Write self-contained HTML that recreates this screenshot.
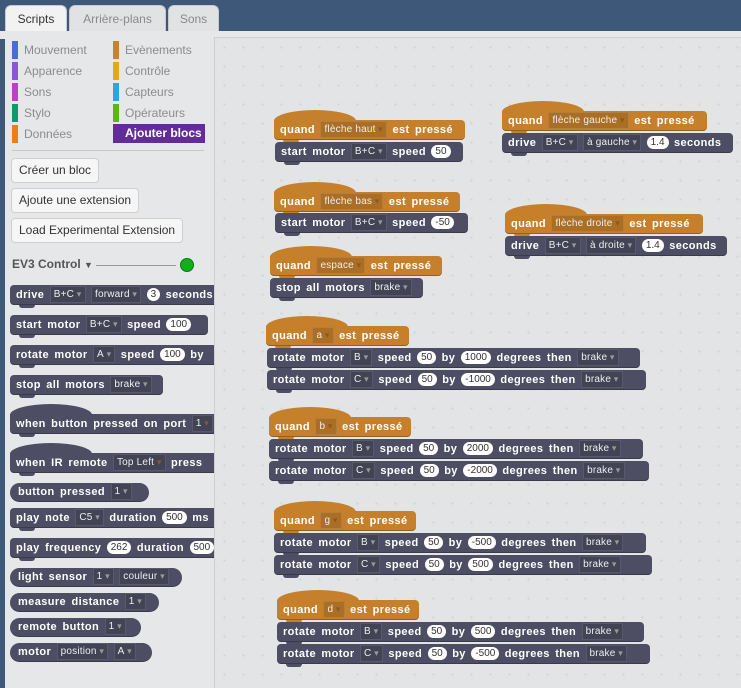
<!DOCTYPE html>
<html><head><meta charset="utf-8"><style>
*{margin:0;padding:0;box-sizing:border-box}
body{width:741px;height:688px;overflow:hidden;background:#3d5878;font-family:"Liberation Sans",sans-serif;position:relative}
.tab{position:absolute;top:5px;height:27px;border-radius:6px 6px 0 0;background:#e1e2e4;color:#8a8a8a;font-size:12px;text-align:center;line-height:26px;border:1px solid #c9cacc;border-bottom:none}
#band{position:absolute;left:0;top:31px;width:741px;height:8px;background:#e8e8e9}
#pal{position:absolute;left:5px;top:31px;width:210px;height:657px;background:#e6e7e8;overflow:hidden}
#scr{position:absolute;left:214px;top:37px;width:527px;height:651px;background-color:#e3e4e5;border:1px solid #cfcfcf;border-right:none;border-bottom:none;background-image:radial-gradient(circle,#d2d3d4 1px,transparent 1.2px);background-size:19px 19px}
.cat{position:absolute;font-size:12px;color:#8c8c8c;line-height:18px;height:18px;padding-left:12px}
.cat i{position:absolute;left:0;top:0;width:6px;height:18px}
.btn{position:absolute;left:6px;height:25px;background:#f6f6f6;border:1px solid #cfcfcf;border-radius:4px;font-size:12px;color:#333;line-height:23px;padding:0 7px}
.b{position:absolute;height:20px;background:#4d4e64;border-radius:4px;color:#fff;font-weight:bold;font-size:11px;line-height:20px;padding:0 6px;white-space:nowrap;letter-spacing:.4px;word-spacing:2px;box-shadow:inset 0 -1px 0 rgba(0,0,0,.25)}
.b::after{content:"";position:absolute;left:9px;bottom:-3px;width:16px;height:3px;background:inherit;border-radius:0 0 4px 4px}
.b.r::after{display:none}
.r{border-radius:10px;padding:0 8px;height:19px;line-height:19px}
.h{background:#c6802b;border-radius:0 4px 4px 4px}
.h::before{content:"";position:absolute;left:0;top:-10px;width:82px;height:11px;background:inherit;border-radius:50% 50% 0 0/100% 100% 0 0}
.d{display:inline-block;background:rgba(0,0,0,.14);border:1px solid rgba(255,255,255,.12);font-weight:normal;font-size:10px;line-height:14px;padding:0 3px;color:#eee;letter-spacing:.2px;word-spacing:0;vertical-align:1px}
.d::after{content:" \25BE";font-size:9px;color:#999}
.h .d::after{color:#8a5a20}
.v{display:inline-block;background:#fff;color:#333;border-radius:8px;font-weight:normal;font-size:10px;line-height:13px;padding:0 4px;vertical-align:1px;letter-spacing:0}
</style></head><body>
<div class="tab" style="left:5px;width:62px;background:#f2f2f2;color:#333">Scripts</div>
<div class="tab" style="left:69px;width:97px">Arrière-plans</div>
<div class="tab" style="left:168px;width:51px">Sons</div>
<div id="band"></div>
<div id="pal">
<div class="cat" style="left:7px;top:10px"><i style="background:#4a6cd4"></i>Mouvement</div>
<div class="cat" style="left:7px;top:31px"><i style="background:#8a55d7"></i>Apparence</div>
<div class="cat" style="left:7px;top:52px"><i style="background:#bb42c3"></i>Sons</div>
<div class="cat" style="left:7px;top:73px"><i style="background:#0e9a6c"></i>Stylo</div>
<div class="cat" style="left:7px;top:94px"><i style="background:#ee7d16"></i>Données</div>
<div class="cat" style="left:108px;top:10px"><i style="background:#c88330"></i>Evènements</div>
<div class="cat" style="left:108px;top:31px"><i style="background:#e1a91a"></i>Contrôle</div>
<div class="cat" style="left:108px;top:52px"><i style="background:#2ca5e2"></i>Capteurs</div>
<div class="cat" style="left:108px;top:73px"><i style="background:#5cb712"></i>Opérateurs</div>
<div class="cat" style="left:108px;top:93px;width:92px;height:19px;background:#632d99;color:#fff;font-weight:bold;padding-left:12px;line-height:19px"><i style="background:#632d99"></i>Ajouter blocs</div>
<div style="position:absolute;left:7px;top:119px;width:192px;height:1px;background:#c8c8c8"></div>
<div class="btn" style="top:127px">Créer un bloc</div>
<div class="btn" style="top:157px">Ajoute une extension</div>
<div class="btn" style="top:187px">Load Experimental Extension</div>
<div style="position:absolute;left:7px;top:226px;font-size:12px;font-weight:bold;color:#555">EV3 Control <span style="font-size:9px">▼</span></div>
<div style="position:absolute;left:91px;top:234px;width:80px;height:1px;background:#999"></div>
<div style="position:absolute;left:175px;top:227px;width:14px;height:14px;border-radius:50%;background:#11b01a;border:1px solid #0a7a10"></div>

<div class="b" style="left:5px;top:254px;width:220px">drive <span class="d">B+C</span> <span class="d">forward</span> <span class="v">3</span> seconds</div>
<div class="b" style="left:5px;top:284px;width:198px">start motor <span class="d">B+C</span> speed <span class="v">100</span></div>
<div class="b" style="left:5px;top:314px;width:220px">rotate motor <span class="d">A</span> speed <span class="v">100</span> by</div>
<div class="b" style="left:5px;top:344px;width:153px">stop all motors <span class="d">brake</span></div>
<div class="b h" style="left:5px;top:383px;width:220px;background:#4d4e64">when button pressed on port <span class="d">1</span></div>
<div class="b h" style="left:5px;top:422px;width:220px;background:#4d4e64">when IR remote <span class="d">Top Left</span> press</div>
<div class="b r" style="left:5px;top:452px;width:139px">button pressed <span class="d">1</span></div>
<div class="b" style="left:5px;top:477px;width:220px">play note <span class="d">C5</span> duration <span class="v">500</span> ms</div>
<div class="b" style="left:5px;top:507px;width:220px">play frequency <span class="v">262</span> duration <span class="v">500</span></div>
<div class="b r" style="left:5px;top:537px;width:172px">light sensor <span class="d">1</span> <span class="d">couleur</span></div>
<div class="b r" style="left:5px;top:562px;width:149px">measure distance <span class="d">1</span></div>
<div class="b r" style="left:5px;top:587px;width:131px">remote button <span class="d">1</span></div>
<div class="b r" style="left:5px;top:612px;width:142px">motor <span class="d">position</span> <span class="d">A</span></div>
</div>
<div id="scr"></div>

<div class="b h" style="left:274px;top:120px;width:191px">quand <span class="d">flèche haut</span> est pressé</div>
<div class="b" style="left:275px;top:142px;width:188px">start motor <span class="d">B+C</span> speed <span class="v">50</span></div>
<div class="b h" style="left:274px;top:192px;width:186px">quand <span class="d">flèche bas</span> est pressé</div>
<div class="b" style="left:275px;top:213px;width:193px">start motor <span class="d">B+C</span> speed <span class="v">-50</span></div>
<div class="b h" style="left:270px;top:256px;width:172px">quand <span class="d">espace</span> est pressé</div>
<div class="b" style="left:270px;top:278px;width:153px">stop all motors <span class="d">brake</span></div>
<div class="b h" style="left:502px;top:111px;width:205px">quand <span class="d">flèche gauche</span> est pressé</div>
<div class="b" style="left:502px;top:133px;width:231px">drive <span class="d">B+C</span> <span class="d">à gauche</span> <span class="v">1.4</span> seconds</div>
<div class="b h" style="left:505px;top:214px;width:198px">quand <span class="d">flèche droite</span> est pressé</div>
<div class="b" style="left:505px;top:236px;width:222px">drive <span class="d">B+C</span> <span class="d">à droite</span> <span class="v">1.4</span> seconds</div>

<div class="b h" style="left:266px;top:326px;width:143px">quand <span class="d">a</span> est pressé</div>
<div class="b" style="left:267px;top:348px;width:373px">rotate motor <span class="d">B</span> speed <span class="v">50</span> by <span class="v">1000</span> degrees then <span class="d">brake</span></div>
<div class="b" style="left:267px;top:370px;width:379px">rotate motor <span class="d">C</span> speed <span class="v">50</span> by <span class="v">-1000</span> degrees then <span class="d">brake</span></div>

<div class="b h" style="left:269px;top:417px;width:142px">quand <span class="d">b</span> est pressé</div>
<div class="b" style="left:269px;top:439px;width:374px">rotate motor <span class="d">B</span> speed <span class="v">50</span> by <span class="v">2000</span> degrees then <span class="d">brake</span></div>
<div class="b" style="left:269px;top:461px;width:380px">rotate motor <span class="d">C</span> speed <span class="v">50</span> by <span class="v">-2000</span> degrees then <span class="d">brake</span></div>

<div class="b h" style="left:274px;top:511px;width:142px">quand <span class="d">g</span> est pressé</div>
<div class="b" style="left:274px;top:533px;width:372px">rotate motor <span class="d">B</span> speed <span class="v">50</span> by <span class="v">-500</span> degrees then <span class="d">brake</span></div>
<div class="b" style="left:274px;top:555px;width:378px">rotate motor <span class="d">C</span> speed <span class="v">50</span> by <span class="v">500</span> degrees then <span class="d">brake</span></div>

<div class="b h" style="left:277px;top:600px;width:142px">quand <span class="d">d</span> est pressé</div>
<div class="b" style="left:277px;top:622px;width:367px">rotate motor <span class="d">B</span> speed <span class="v">50</span> by <span class="v">500</span> degrees then <span class="d">brake</span></div>
<div class="b" style="left:277px;top:644px;width:373px">rotate motor <span class="d">C</span> speed <span class="v">50</span> by <span class="v">-500</span> degrees then <span class="d">brake</span></div>
</body></html>
